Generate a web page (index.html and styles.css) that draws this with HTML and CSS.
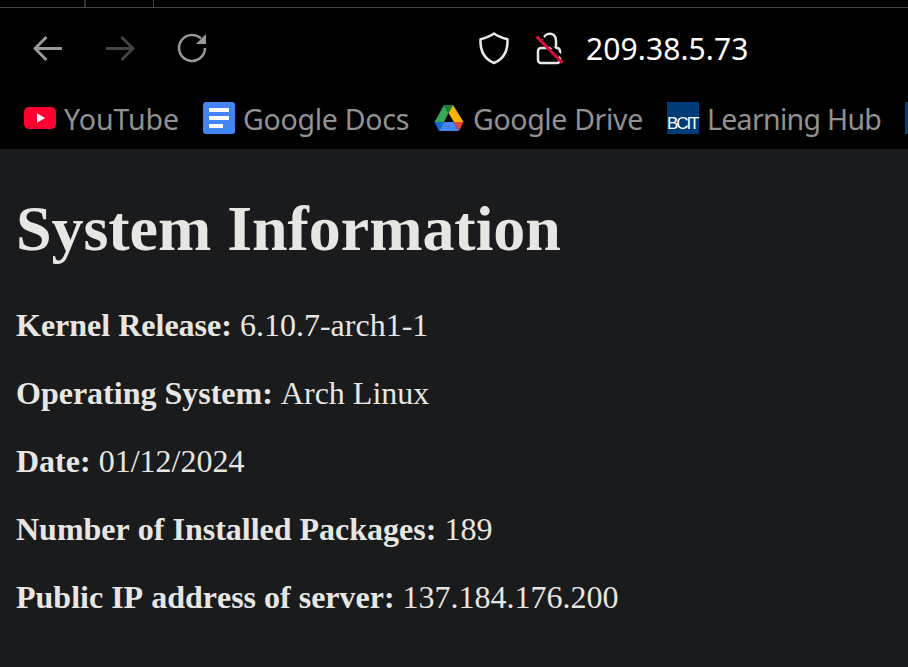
FILE: index.html
```html
<!DOCTYPE html>
<html lang="en">
<head>
<meta charset="utf-8">
<title>System Information</title>
<link rel="stylesheet" href="styles.css">
</head>
<body>
<div class="tabs"><span class="tab-edge"></span><span class="tab-edge tab-edge-thin"></span></div>
<nav class="toolbar">
  <svg class="icon back" viewBox="0 0 32 32"><path d="M30 16.500H3M14.500 5L3 16.500L14.500 28"/></svg>
  <svg class="icon forward" viewBox="0 0 32 32"><path d="M2 16.500h27M17.500 5L29 16.500L17.500 28"/></svg>
  <svg class="icon reload" viewBox="0 0 32 32"><path d="M29 16A13 13 0 1 1 25 6.600"/><path class="fill" d="M30 2v10h-10z"/></svg>
  <svg class="icon shield" viewBox="0 0 32 34"><path d="M16 2.500C20 5.500 24.500 7 29.500 8.200C30 19 25.500 28 16 32C6.500 28 2 19 2.500 8.200C7.500 7 12 5.500 16 2.500Z"/></svg>
  <svg class="icon lock" viewBox="0 0 32 34"><rect x="4" y="17" width="22" height="15" rx="3"/><path d="M9 9C10 1 22 0 22 9.500V17"/><path class="gap" d="M5 3L31 29"/><path class="slash" d="M2.500 5.500L28.500 32"/></svg>
  <span class="address">209.38.5.73</span>
</nav>
<div class="bookmarks">
  <div class="bookmark youtube">
    <svg class="favicon" viewBox="0 0 32 32"><rect y="5" width="32" height="22" rx="5" fill="#ff0033"/><path d="M13 11.300v9.400l8-4.700z" fill="#fff"/></svg>
    <span>YouTube</span>
  </div>
  <div class="bookmark docs">
    <svg class="favicon" viewBox="0 0 32 32"><rect width="32" height="32" rx="3" fill="#4285f4"/><path d="M6 6h20v4H6zM6 14h20v4H6zM6 22h14v4H6z" fill="#fff"/></svg>
    <span>Google Docs</span>
  </div>
  <div class="bookmark drive">
    <svg class="favicon" viewBox="0 0 32 32"><path d="M11 3h9l-4.500 8z" fill="#188038"/><path d="M20 3L30.500 20H21L15.500 11z" fill="#fbb406"/><path d="M1.500 20h9.500L6 29z" fill="#1967d2"/><path d="M11 20h10l5 9H6z" fill="#4285f4"/><path d="M21 20h9.500L26 29z" fill="#ea4335"/><path d="M15.500 11L11 20H1.500L11 3z" fill="#34a853"/></svg>
    <span>Google Drive</span>
  </div>
  <div class="bookmark hub">
    <span class="favicon bcit">BCIT</span>
    <span>Learning Hub</span>
  </div>
  <span class="next-favicon"></span>
</div>
<main class="page">
  <h1>System Information</h1>
  <p><strong>Kernel Release:</strong> 6.10.7-arch1-1</p>
  <p><strong>Operating System:</strong> Arch Linux</p>
  <p><strong>Date:</strong> 01/12/2024</p>
  <p><strong>Number of Installed Packages:</strong> 189</p>
  <p><strong>Public IP address of server:</strong> 137.184.176.200</p>
</main>
</body>
</html>
```

FILE: styles.css
```css
* { box-sizing: border-box; }
body {
  margin: 0;
  height: 667px;
  overflow: hidden;
  display: flex;
  flex-direction: column;
  background: #1a1b1c;
  color: #e8e6e3;
  font-family: "Liberation Serif", serif;
}
.tabs {
  height: 8px;
  flex: none;
  display: flex;
  background: #000;
  border-bottom: 1px solid #454545;
}
.tab-edge { width: 2px; margin-left: 84px; background: #333; }
.tab-edge-thin { width: 1px; margin-left: 67px; background: #454545; }
.toolbar {
  height: 80px;
  flex: none;
  display: flex;
  align-items: center;
  padding-left: 32px;
  background: #000;
  font-family: "Noto Sans", sans-serif;
}
.icon { width: 32px; height: 32px; flex: none; fill: none; stroke: #999; stroke-width: 3; stroke-linejoin: round; stroke-linecap: butt; }
.forward { margin-left: 40px; stroke: #444; }
.reload { margin-left: 40px; stroke-width: 2.5; }
.icon .fill { fill: #999; stroke: none; }
.shield, .lock { height: 34px; stroke: #e8e8e8; stroke-width: 2.5; }
.shield { margin-left: 270px; }
.lock { margin-left: 24px; }
.icon .gap { stroke: #000; }
.icon .slash { stroke: #e00b3e; stroke-width: 3; }
.address { margin-left: 20px; padding-top: 2px; font-size: 30px; line-height: 42px; letter-spacing: 0.1px; color: #fff; }
.bookmarks {
  height: 61px;
  flex: none;
  display: flex;
  align-items: center;
  padding-left: 24px;
  background: #000;
  color: #929292;
  font: 28.5px/42px "Noto Sans", sans-serif;
  white-space: nowrap;
}
.bookmark { display: flex; align-items: center; gap: 8px; width: 179px; flex: none; }
.favicon { width: 32px; height: 32px; flex: none; margin-top: -1px; }
.bcit { background: #003c78; color: #fff; font: 17px/44px "Liberation Sans", sans-serif; letter-spacing: -2px; }
.docs { width: 230px; letter-spacing: -0.27px; }
.drive { width: 234px; letter-spacing: -0.35px; }
.hub { width: 238px; letter-spacing: -0.7px; }
.next-favicon { width: 3px; height: 32px; margin-top: -1px; background: #003c78; }
.page { padding: 43px 16px 0; flex: 1; font-kerning: none; }
h1 { margin: 0 0 41px; font-size: 64px; line-height: 74px; letter-spacing: -0.05px; }
p { margin: 0 0 32px; font-size: 32px; line-height: 36px; }
```
